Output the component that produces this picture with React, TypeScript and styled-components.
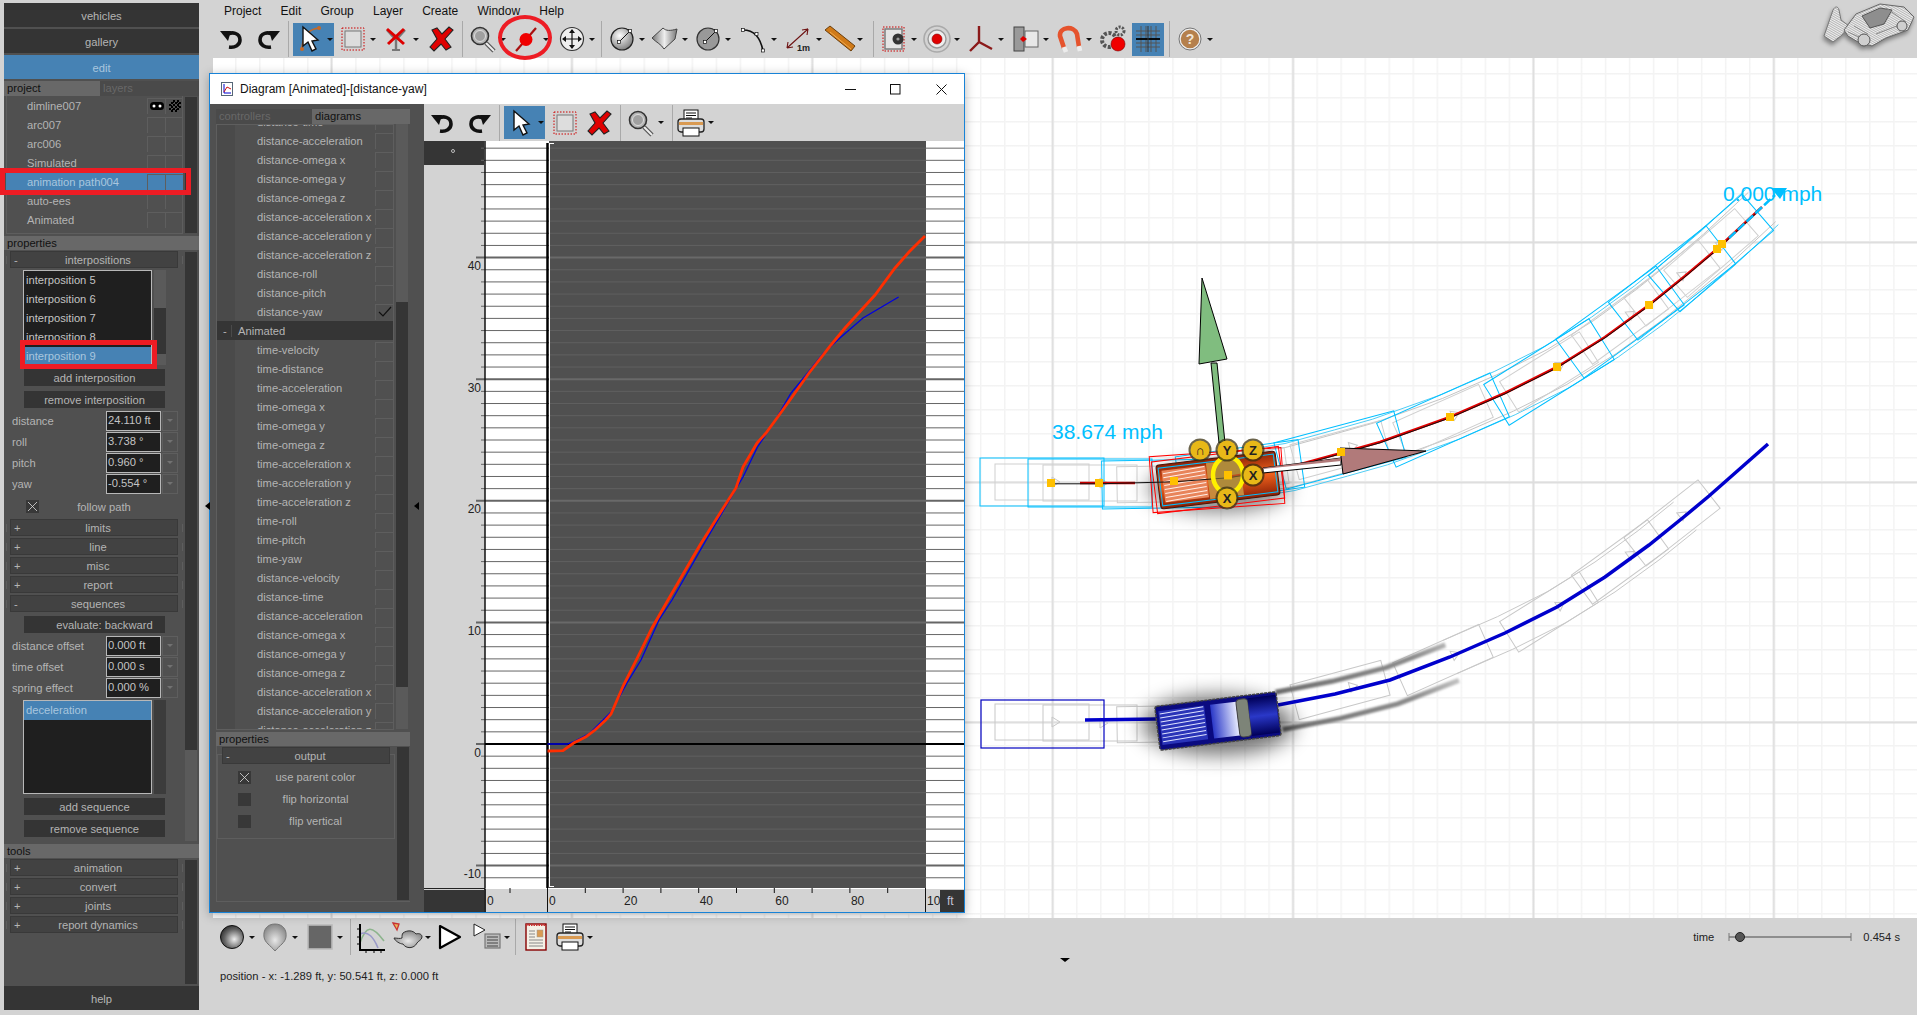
import React from 'react'
import styled, { createGlobalStyle } from 'styled-components'

type Pt = [number, number]

const GlobalStyle = createGlobalStyle`
  html, body { margin: 0; padding: 0; height: 100%; overflow: hidden; background: #d3d3d3; }
  body { font-family: "Liberation Sans", Arial, sans-serif; font-size: 11.2px; color: #b4b4b4; }
  #root { height: 100%; }
`

const App_ = styled.div`
  position: relative;
  display: flex;
  width: 1917px;
  height: 1015px;
  overflow: hidden;
  background: #d3d3d3;
`

/* ---------- side panels ---------- */

const Sidebar = styled.aside`
  position: relative;
  flex: none;
  display: flex;
  flex-direction: column;
  width: 195px;
  height: 1006px;
  margin: 3px 0 0 4px;
  background: #505050;
`

const NavButton = styled.div<{ $active?: boolean }>`
  flex: none;
  display: flex;
  align-items: center;
  justify-content: center;
  box-sizing: border-box;
  height: 24px;
  margin-bottom: 2px;
  padding-top: 1px;
  background: ${p => (p.$active ? '#4682b4' : '#343434')};
  color: ${p => (p.$active ? '#a9c6de' : '#b4b4b4')};
`

const HelpButton = styled(NavButton)`
  margin: 1px 0 0;
`

const Tabs = styled.div<{ $width: number }>`
  flex: none;
  display: flex;
  width: ${p => p.$width}px;
  height: 15px;
  background: #4a4a4a;
`

const Tab = styled.div<{ $on?: boolean; $width: number }>`
  box-sizing: border-box;
  width: ${p => p.$width}px;
  padding-left: 3px;
  line-height: 14px;
  background: ${p => (p.$on ? '#686868' : 'transparent')};
  color: ${p => (p.$on ? '#111' : '#686868')};
`

const Header = styled.div<{ $width?: number }>`
  flex: none;
  box-sizing: border-box;
  width: ${p => (p.$width ? `${p.$width}px` : 'auto')};
  height: 14px;
  margin-top: 2px;
  padding-left: 3px;
  line-height: 14px;
  background: #686868;
  color: #111;
`

const Split = styled.div<{ $h: number; $mt?: number }>`
  flex: none;
  display: flex;
  height: ${p => p.$h}px;
  margin-top: ${p => p.$mt ?? 0}px;
`

const Column = styled.div`
  flex: none;
  width: 177px;
  margin-left: 2px;
  overflow: hidden;
`

const ProjectList = styled(Column)`
  border-bottom: 1px solid #5e5e5e;
  height: 137px;
  box-shadow: inset 1px 0 #5e5e5e, inset -1px 0 #5e5e5e;
`

const ProjectRow = styled.div<{ $on?: boolean }>`
  display: flex;
  align-items: center;
  height: 19px;
  padding-left: 21px;
  background: ${p => (p.$on ? '#4682b4' : 'transparent')};
  color: ${p => (p.$on ? '#a9c6de' : '#b4b4b4')};
`

const RowName = styled.span`
  flex: 1;
`

const Cell = styled.span`
  display: flex;
  align-items: center;
  justify-content: center;
  box-sizing: border-box;
  width: 18px;
  height: 16px;
  border: 1px solid #5e5e5e;
  border-width: 1px 0 0 1px;
`

const Scroll = styled.div<{ $tint?: string; $mt?: number }>`
  flex: none;
  width: 12px;
  margin: ${p => p.$mt ?? 1}px 0 1px 2px;
  background: ${p => p.$tint ?? '#353535'};
`

const Thumb = styled.div<{ $top: number; $h: number }>`
  height: ${p => p.$h}px;
  margin-top: ${p => p.$top}px;
  background: #353535;
`

const BarWrap = styled.div`
  position: relative;
  height: 19px;
  padding: 0 5px 0 4px;
  &::before {
    content: '';
    position: absolute;
    left: 0;
    right: 0;
    top: 5px;
    height: 8px;
    border: 1px solid #5e5e5e;
    border-width: 0 1px;
  }
`

const Bar = styled.div`
  position: relative;
  display: flex;
  align-items: center;
  height: 17px;
  background: #424242;
  box-shadow: inset 0 0 0 1px #393939;
`

const BarSign = styled.span`
  width: 8px;
  padding-left: 4px;
  margin-right: -4px;
`

const BarTitle = styled.span`
  flex: 1;
  text-align: center;
`

const ListLine = styled.div<{ $h: number; $mt?: number }>`
  display: flex;
  height: ${p => p.$h}px;
  margin: ${p => p.$mt ?? 2}px 0 0 17px;
`

const ListBox = styled.div`
  box-sizing: border-box;
  width: 129px;
  overflow: hidden;
  background: #1f1f1f;
  border: 1px solid #b8b8b8;
`

const ListItem = styled.div<{ $on?: boolean }>`
  height: 19px;
  padding-left: 2px;
  line-height: 18px;
  background: ${p => (p.$on ? '#4682b4' : 'transparent')};
  color: ${p => (p.$on ? '#a9c6de' : '#c4c4c4')};
`

const ListScroll = styled.div<{ $tint: string }>`
  width: 12px;
  margin-left: 2px;
  background: ${p => p.$tint};
`

const PlainButton = styled.div<{ $mt: number; $indent?: number }>`
  display: flex;
  align-items: center;
  justify-content: center;
  box-sizing: border-box;
  width: 141px;
  height: 17px;
  margin: ${p => p.$mt}px 0 0 18px;
  padding-left: ${p => p.$indent ?? 0}px;
  background: #343434;
`

const ValueStack = styled.div<{ $mt: number }>`
  margin-top: ${p => p.$mt}px;
`

const ValueRow = styled.div`
  display: flex;
  align-items: center;
  height: 21px;
  padding-left: 6px;
`

const ValueLabel = styled.span`
  width: 94px;
`

const ValueBox = styled.div`
  box-sizing: border-box;
  width: 55px;
  height: 20px;
  padding-left: 1px;
  line-height: 17px;
  background: #1f1f1f;
  border: 1.5px solid #b8b8b8;
  color: #c4c4c4;
`

const Stepper = styled.div`
  display: flex;
  align-items: center;
  justify-content: center;
  box-sizing: border-box;
  width: 16px;
  height: 20px;
  margin-left: 1px;
  border: 1px solid #5e5e5e;
  &::after {
    content: '';
    border: 3px solid transparent;
    border-top-color: #727272;
    border-bottom: 0;
  }
`

const FlagRow = styled.div<{ $h: number }>`
  display: flex;
  align-items: center;
  height: ${p => p.$h}px;
  padding: 0 14px 0 20px;
`

const CheckBoxFace = styled.div`
  flex: none;
  display: flex;
  width: 13px;
  height: 13px;
  background: #383838;
`

const FlagLabel = styled.span`
  flex: 1;
  text-align: center;
`

const AnnotRect = styled.div<{ $x: number; $y: number; $w: number; $h: number }>`
  position: absolute;
  left: ${p => p.$x}px;
  top: ${p => p.$y}px;
  width: ${p => p.$w}px;
  height: ${p => p.$h}px;
  box-sizing: border-box;
  border: 5px solid #ed1c24;
  pointer-events: none;
`

const SashLeft = styled.div<{ $x: number; $y: number }>`
  position: absolute;
  left: ${p => p.$x}px;
  top: ${p => p.$y}px;
  border: 4px solid transparent;
  border-right: 5px solid #000;
  border-left: 0;
`

/* ---------- main column ---------- */

const Main = styled.main`
  position: relative;
  flex: 1;
  display: flex;
  flex-direction: column;
  min-width: 0;
  margin-left: 14px;
`

const MenuBar = styled.nav`
  flex: none;
  display: flex;
  gap: 19.2px;
  height: 20px;
  padding-left: 11px;
  line-height: 22px;
  font-size: 12px;
  color: #111;
`

const Toolbar = styled.div<{ $pl: number; $h: number }>`
  flex: none;
  display: flex;
  align-items: center;
  height: ${p => p.$h}px;
  padding-left: ${p => p.$pl}px;
  background: #d3d3d3;
`

const Tool = styled.div<{ $w: number; $gap?: number; $active?: boolean; $center?: boolean }>`
  flex: none;
  display: flex;
  align-items: center;
  justify-content: ${p => (p.$center ? 'center' : 'flex-start')};
  width: ${p => p.$w}px;
  height: 33px;
  margin-right: ${p => p.$gap ?? 0}px;
  background: ${p => (p.$active ? '#4682b4' : 'transparent')};
  svg { flex: none; }
`

const Drop = styled.i`
  flex: none;
  width: 0;
  height: 0;
  border: 3px solid transparent;
  border-top: 3px solid #111;
  border-bottom: 0;
`

const Sep = styled.div<{ $l: number; $r: number }>`
  flex: none;
  width: 1px;
  height: 36px;
  margin: 0 ${p => p.$r}px 0 ${p => p.$l}px;
  background: #a9a9a9;
`

const Canvas = styled.section`
  flex: none;
  height: 860px;
  background-color: #fff;
  background-image:
    linear-gradient(90deg, transparent, #dedede 1px, #dedede 2px, transparent 3px),
    linear-gradient(180deg, transparent, #dedede 1px, #dedede 2px, transparent 3px),
    linear-gradient(90deg, #f3f3f3 1px, transparent 2px),
    linear-gradient(180deg, #f3f3f3 1px, transparent 2px);
  background-size: 240.4px 100%, 100% 240px, 24.04px 100%, 100% 24px;
  background-position: 117px 0, 0 183px, 22px 0, 0 15px;
  svg { display: block; width: 100%; height: 100%; }
`

const TimePanel = styled.div`
  display: flex;
  align-items: center;
  margin-left: auto;
  padding-right: 17px;
  color: #222;
`

const TimeLabel = styled.span`
  margin-right: 14px;
`

const TimeValue = styled.span`
  margin-left: 11px;
`

const SashRow = styled.div`
  flex: none;
  display: flex;
  justify-content: center;
  height: 6px;
  padding-top: 2px;
  &::after {
    content: '';
    height: 0;
    border: 5px solid transparent;
    border-top: 4px solid #000;
    border-bottom: 0;
  }
`

const Status = styled.div`
  padding: 6px 0 0 7px;
  color: #222;
`

const Logo = styled.svg`
  position: absolute;
  top: 0;
  right: 0;
  filter: drop-shadow(-1px 3px 2px rgba(0, 0, 0, 0.4));
`

const TargetRing = styled.div`
  position: absolute;
  left: 285px;
  top: 15px;
  box-sizing: border-box;
  width: 54px;
  height: 45px;
  border: 4.5px solid #ed1c24;
  border-radius: 50%;
  pointer-events: none;
`

/* ---------- diagram window ---------- */

const DiagramWindow = styled.div`
  position: absolute;
  left: 209px;
  top: 73px;
  display: flex;
  flex-direction: column;
  box-sizing: border-box;
  width: 756px;
  height: 840px;
  border: 1px solid #1883d7;
  background: #d3d3d3;
  box-shadow: 0 2px 10px rgba(0, 0, 0, 0.28);
`

const TitleBar = styled.div`
  flex: none;
  display: flex;
  align-items: center;
  height: 30px;
  padding-left: 11px;
  background: #fff;
  color: #111;
  font-size: 12px;
`

const TitleText = styled.span`
  flex: 1;
  margin-left: 7px;
`

const WinButton = styled.span`
  display: flex;
  align-items: center;
  justify-content: center;
  width: 45.5px;
  height: 30px;
`

const WindowBody = styled.div`
  flex: 1;
  display: flex;
  min-height: 0;
`

const DiagramSide = styled.div`
  position: relative;
  flex: none;
  display: flex;
  flex-direction: column;
  box-sizing: border-box;
  width: 214px;
  padding: 5px 0 0 6px;
  background: #505050;
`

const DiagramList = styled.div`
  flex: none;
  box-sizing: border-box;
  width: 178px;
  overflow: hidden;
  border: 1px solid #5e5e5e;
  background: linear-gradient(90deg, #4a4a4a 18px, #505050 18px);
`

const DiagramRows = styled.div`
  margin-top: -13px;
`

const DiagramRow = styled.div`
  display: flex;
  align-items: center;
  height: 19px;
  padding-left: 40px;
`

const GroupRow = styled.div`
  display: flex;
  align-items: center;
  height: 19px;
  background: #353535;
`

const GroupSign = styled.span`
  width: 15px;
  padding-left: 6px;
  box-sizing: border-box;
  margin: 0 6px 0 0;
  border-right: 1px solid #4a4a4a;
`

const OutputGroup = styled.div`
  flex: none;
  box-sizing: border-box;
  width: 178px;
  height: 85px;
  margin: 8px 0 0 0;
  border: 1px solid #5e5e5e;
`

const OutputBar = styled(Bar)`
  margin: -8px 4px 2px;
`

const OutputFrame = styled.div`
  flex: none;
  display: flex;
  box-sizing: border-box;
  width: 194px;
  height: 156px;
  border-bottom: 1px solid #5e5e5e;
  border-left: 1px solid #5e5e5e;
`

const ChartColumn = styled.div`
  flex: 1;
  display: flex;
  flex-direction: column;
  min-width: 0;
`

const ChartSvg = styled.svg`
  display: block;
  flex: none;
`

/* ---------- icons ---------- */

const Ico = ({ children }: { children: React.ReactNode }) => (
  <svg width="34" height="32" viewBox="0 0 34 32">{children}</svg>
)

const Undo = () => (
  <Ico>
    <path d="M5 8l11 0-3 10z" fill="#111" />
    <path d="M11 12c6-4 14-2 14 5 0 5-5 8-11 7" fill="none" stroke="#111" strokeWidth="3.6" />
  </Ico>
)

const Redo = () => (
  <Ico>
    <path d="M29 8l-11 0 3 10z" fill="#111" />
    <path d="M23 12c-6-4-14-2-14 5 0 5 5 8 11 7" fill="none" stroke="#111" strokeWidth="3.6" />
  </Ico>
)

const Pick = ({ curve }: { curve?: boolean }) => (
  <Ico>
    {curve && (
      <>
        <path d="M9 26C9 16 14 6 26 5" fill="none" stroke="#c86a28" strokeWidth="1.4" />
        <circle cx="9" cy="26" r="2" fill="#c86a28" />
        <circle cx="26" cy="5" r="2" fill="#c86a28" />
      </>
    )}
    <path d="M10 4l0 19 5-4 4 9 4-2-4-8 6-1z" fill="#fff" stroke="#111" strokeWidth="1.4" />
  </Ico>
)

const DotRect = () => (
  <Ico>
    <rect x="6" y="5" width="22" height="22" fill="none" stroke="#c00" strokeDasharray="1.5 1.5" />
    <rect x="9" y="8" width="16" height="16" fill="#ddd" stroke="#777" />
  </Ico>
)

const RedCross = () => (
  <Ico>
    <path d="M7 7l5-2 5 6 7-7 4 3-8 9 6 8-5 3-5-6-7 7-4-4 7-8z" fill="#e00000" stroke="#222" strokeWidth="1.1" />
  </Ico>
)

const Fork = () => (
  <Ico>
    <path d="M8 7l9 10 9-10M17 17v10" fill="none" stroke="#777" strokeWidth="2.4" />
    <path d="M13 27h8" stroke="#777" strokeWidth="2" />
    <path d="M8 6l17 15M25 6L9 21" stroke="#d00" strokeWidth="3" />
  </Ico>
)

const Lens = () => (
  <Ico>
    <path d="M20 20l8 8" stroke="#555" strokeWidth="4.5" />
    <path d="M20 20l8 8" stroke="#eee" strokeWidth="2" />
    <circle cx="14" cy="13" r="8.5" fill="#b4b4b4" stroke="#333" strokeWidth="1.6" />
    <circle cx="14" cy="13" r="5.5" fill="#a0a0a0" stroke="#ddd" />
  </Ico>
)

const RedTarget = () => (
  <Ico>
    <path d="M7 28L27 5" stroke="#a81010" strokeWidth="2.2" />
    <circle cx="17" cy="16.5" r="6.5" fill="#f00000" />
  </Ico>
)

const Move = () => (
  <Ico>
    <circle cx="17" cy="16" r="11.5" fill="#eee" stroke="#333" strokeWidth="1.2" />
    <path d="M17 7v18M8 16h18" stroke="#111" strokeWidth="1.2" />
    <path d="M17 6l-3 4h6zM17 26l-3-4h6zM7 16l4-3v6zM27 16l-4-3v6z" fill="#111" />
  </Ico>
)

const Handles = ({ a, b }: { a: Pt; b: Pt }) => (
  <>
    <path d={`M${a[0]} ${a[1]}L${b[0]} ${b[1]}`} stroke="#111" />
    <rect x={a[0] - 1.5} y={a[1] - 1.5} width="3" height="3" fill="#fff" stroke="#111" strokeWidth=".7" />
    <rect x={b[0] - 1.5} y={b[1] - 1.5} width="3" height="3" fill="#fff" stroke="#111" strokeWidth=".7" />
  </>
)

const Sphere = () => (
  <Ico>
    <circle cx="17" cy="16" r="11" fill="url(#gSphere)" stroke="#222" strokeWidth="1.2" />
    <Handles a={[14, 19]} b={[25, 8]} />
  </Ico>
)

const Surface = () => (
  <Ico>
    <path d="M4 15l11-10c3 3 7 3 14 1l-2 10-11 10c-3-5-7-6-12-11z" fill="url(#gSurf)" stroke="#444" />
  </Ico>
)

const Disc = () => (
  <Ico>
    <circle cx="17" cy="16" r="11" fill="#999" stroke="#333" strokeWidth="1.2" />
    <Handles a={[14, 19]} b={[25, 8]} />
  </Ico>
)

const ArcTool = () => (
  <Ico>
    <path d="M6 7c9 0 17 5 20 21" fill="none" stroke="#111" strokeWidth="1.6" />
    <rect x="4.5" y="5.5" width="3" height="3" fill="#fff" stroke="#111" strokeWidth=".7" />
    <rect x="18" y="9.5" width="3" height="3" fill="#fff" stroke="#111" strokeWidth=".7" />
    <rect x="24.5" y="26" width="3" height="3" fill="#fff" stroke="#111" strokeWidth=".7" />
  </Ico>
)

const Dimension = () => (
  <Ico>
    <path d="M5 25L26 6M5 25l1-6M5 25l6-1M26 6l-6 1M26 6l-1 6" fill="none" stroke="#6e1414" strokeWidth="1.1" />
    <text x="15" y="28" fontSize="9" fontWeight="700" fill="#222">1m</text>
  </Ico>
)

const Chisel = () => (
  <Ico>
    <path d="M2 7l5-4 25 20-4 5z" fill="#d07a18" stroke="#6a3e0c" />
    <path d="M7 9l21 17" stroke="#efa94e" />
  </Ico>
)

const FramedDisc = () => (
  <Ico>
    <rect x="6" y="4" width="21" height="24" fill="none" stroke="#c00" strokeDasharray="1.5 1.5" />
    <rect x="8" y="6" width="17" height="20" fill="#e4e4e4" stroke="#777" strokeWidth="1.4" />
    <circle cx="21" cy="16" r="5.5" fill="#333" />
    <circle cx="21" cy="16" r="1.6" fill="#999" />
  </Ico>
)

const Rings = () => (
  <Ico>
    <circle cx="17" cy="16" r="13" fill="none" stroke="#aaa" strokeWidth="1.6" />
    <circle cx="17" cy="16" r="9" fill="#eee" stroke="#999" strokeWidth="1.4" />
    <circle cx="17" cy="16" r="5" fill="#e00000" stroke="#800" strokeWidth=".6" />
  </Ico>
)

const Axes = () => (
  <Ico>
    <path d="M15 3v16L6 28M15 19l13 7" fill="none" stroke="#8b1a1a" strokeWidth="2.4" />
  </Ico>
)

const Mirror = () => (
  <Ico>
    <rect x="5" y="4" width="10" height="24" fill="#999" stroke="#444" />
    <rect x="16" y="8" width="13" height="16" fill="#e8e8e8" stroke="#666" />
    <path d="M14 13l4 3-4 3-3-3z" fill="#d00" />
  </Ico>
)

const Magnet = () => (
  <Ico>
    <path d="M12 25L8 13C7 4 22 2 25 11l2 13" fill="none" stroke="#e5532d" strokeWidth="4.6" />
    <path d="M12 24l2 5M27 23l1 5" stroke="#ececec" strokeWidth="4.6" />
  </Ico>
)

const Gear = () => (
  <Ico>
    <circle cx="13" cy="17" r="7" fill="none" stroke="#555" strokeWidth="4" strokeDasharray="3 1.6" />
    <circle cx="24" cy="8" r="4" fill="none" stroke="#555" strokeWidth="3" strokeDasharray="2 1.4" />
    <circle cx="22" cy="21" r="7" fill="#f00000" stroke="#700" strokeWidth=".6" />
  </Ico>
)

const GridIcon = () => (
  <Ico>
    <path d="M10 3v26M15 3v26M20 3v26M25 3v26M5 8h24M5 12h24M5 20h24M5 24h24" stroke="#555" />
    <path d="M5 16h24" stroke="#000" strokeWidth="1.8" />
    <path d="M17 3v26" stroke="#333" />
  </Ico>
)

const HelpIcon = () => (
  <Ico>
    <circle cx="17" cy="16" r="10" fill="#b5804c" stroke="#eee" strokeWidth="1.5" />
    <circle cx="17" cy="16" r="11" fill="none" stroke="#777" />
    <text x="17" y="21" fontSize="14" fontWeight="700" textAnchor="middle" fill="#f0e6d8">?</text>
  </Ico>
)

const Ball = () => (
  <Ico>
    <circle cx="17" cy="16" r="11.5" fill="url(#gBall)" stroke="#111" />
  </Ico>
)

const Blob = () => (
  <Ico>
    <path d="M17 3c8 0 12 6 11 13-1 6-6 8-11 14-5-6-10-8-11-14C5 9 9 3 17 3z" fill="url(#gBlob)" stroke="#777" />
  </Ico>
)

const Swatch = () => (
  <Ico>
    <rect x="5" y="4" width="24" height="24" fill="#666" stroke="#bbb" strokeWidth="1.6" />
  </Ico>
)

const GraphIcon = () => (
  <Ico>
    <path d="M6 22C12 4 18 4 30 20" fill="none" stroke="#8cb48c" strokeWidth="1.6" />
    <path d="M6 13c8-4 14 4 18 14" fill="none" stroke="#9a9ac8" strokeWidth="1.6" />
    <path d="M6 3v26h25" fill="none" stroke="#000" strokeWidth="2" />
    <path d="M3 8h3M3 16h3M3 23h3M12 29v3M20 29v3M27 29v3" stroke="#000" />
  </Ico>
)

const Teapot = () => (
  <Ico>
    <path d="M2 2l6 1-2 6z" fill="#e6b85c" stroke="#c33" strokeWidth="1.3" />
    <path d="M12 12c4-3 10-3 13 1 3-1 6 0 6 3s-4 4-5 6c-3 6-11 6-14 1-3 0-8-3-9-6 3 0 6 1 8 0 0-2 0-4 1-5z" fill="url(#gBlob)" stroke="#333" />
  </Ico>
)

const Play = () => (
  <Ico>
    <path d="M7 5l20 11L7 27z" fill="#fff" stroke="#000" strokeWidth="2.2" strokeLinejoin="round" />
  </Ico>
)

const PlayList = () => (
  <Ico>
    <path d="M4 3l11 6-11 6z" fill="#fff" stroke="#222" />
    <rect x="15" y="13" width="15" height="14" fill="#bbb" stroke="#777" strokeWidth="1.2" />
    <path d="M17 16h11M17 19h11M17 22h11M17 25h11" stroke="#444" />
  </Ico>
)

const Note = () => (
  <Ico>
    <rect x="6" y="3" width="20" height="26" fill="#f4f0e6" stroke="#800" strokeWidth="1.4" />
    <path d="M6 4h20" stroke="#c33" strokeDasharray="1.5 1" strokeWidth="2" />
    <rect x="17" y="9" width="6" height="7" fill="#d99a52" stroke="#999" strokeWidth=".5" />
    <path d="M9 10h6M9 13h6M9 16h6M9 19h14M9 22h14M9 25h14" stroke="#888" />
  </Ico>
)

const Printer = () => (
  <Ico>
    <rect x="10" y="3" width="14" height="10" fill="#fff" stroke="#111" />
    <path d="M12 6h10M12 8.5h10M12 11h6" stroke="#111" />
    <rect x="4" y="12" width="26" height="13" rx="3" fill="#ddd" stroke="#222" strokeWidth="1.3" />
    <rect x="5" y="15" width="24" height="3" fill="#d99a52" />
    <rect x="9" y="21" width="16" height="8" fill="#fff" stroke="#111" />
  </Ico>
)

const SmallX = () => (
  <svg width="13" height="13" viewBox="0 0 13 13">
    <path d="M2 2l9 9M11 2l-9 9" stroke="#ddd" strokeWidth=".8" />
  </svg>
)

const CheckBox = ({ on }: { on?: boolean }) => <CheckBoxFace>{on && <SmallX />}</CheckBoxFace>

const Goggles = () => (
  <svg width="14" height="8" viewBox="0 0 14 8">
    <rect width="14" height="8" rx="3.5" fill="#000" />
    <circle cx="4" cy="4" r="1.5" fill="#fff" />
    <circle cx="10" cy="4" r="1.5" fill="#fff" />
  </svg>
)

const Dither = () => (
  <svg width="12" height="12" viewBox="0 0 12 12" shapeRendering="crispEdges">
    {Array.from({ length: 36 }, (_, i) => {
      const x = i % 6
      const y = Math.floor(i / 6)
      return (x + y) % 2 === 0 && Math.hypot(x - 2.5, y - 2.5) < 3.4
        ? <rect key={i} x={x * 2} y={y * 2} width="1.5" height="1.5" fill="#000" />
        : null
    })}
    <circle cx="6" cy="6" r="4" fill="none" stroke="#000" strokeDasharray="1 1" />
  </svg>
)

const Tick = () => (
  <svg width="14" height="12" viewBox="0 0 14 12">
    <path d="M1 6l4 4 8-9" fill="none" stroke="#111" strokeWidth="1.2" />
  </svg>
)

/* ---------- scene helpers ---------- */

const line = (pts: Pt[]) => pts.map(p => p.join(',')).join(' ')

const offset = (pts: Pt[], d: number): Pt[] =>
  pts.map((p, i) => {
    const a = pts[Math.max(i - 1, 0)]
    const b = pts[Math.min(i + 1, pts.length - 1)]
    const dx = b[0] - a[0]
    const dy = b[1] - a[1]
    const l = Math.hypot(dx, dy)
    return [p[0] - (dy / l) * d, p[1] + (dx / l) * d] as Pt
  })

const upperPath: Pt[] = [
  [1051, 483], [1099, 483], [1174, 481], [1228, 477], [1290, 467], [1341, 453], [1380, 442],
  [1450, 417], [1505, 393], [1557, 367], [1605, 337], [1649, 305], [1685, 276], [1717, 249], [1762, 207],
]

const lowerPath: Pt[] = [
  [1278, 705], [1335, 694], [1390, 680], [1450, 657], [1505, 633], [1557, 607], [1605, 577],
  [1649, 545], [1685, 516], [1709, 496], [1768, 444],
]

const frames: [number, number, number][] = [
  [1042, 482, 0], [1090, 483, 0], [1164, 484, -1], [1240, 472, -8], [1340, 450, -15],
  [1443, 420, -24], [1549, 372, -32], [1620, 322, -36], [1672, 283, -38], [1711, 253, -41],
]

const Frame = ({ c, w, h, stroke, dy = 0, mark }: { c: [number, number, number]; w: number; h: number; stroke: string; dy?: number; mark?: boolean }) => (
  <g transform={`rotate(${c[2]} ${c[0]} ${c[1] + dy})`}>
    <rect x={c[0] - w / 2} y={c[1] + dy - h / 2} width={w} height={h} fill="none" stroke={stroke} strokeWidth="1" />
    {mark && <path d={`M${c[0] + 10} ${c[1] + dy - 5}v10l8 -5z`} fill="none" stroke="#c8c8c8" strokeWidth="1" />}
  </g>
)

const Knob = ({ x, y, label }: { x: number; y: number; label: string }) => (
  <g>
    <circle cx={x} cy={y} r="11.5" fill="#3a3010" opacity=".75" />
    <circle cx={x} cy={y} r="9.5" fill="#e8b818" />
    <text x={x} y={y + 4.5} fontSize="13" fontWeight="700" textAnchor="middle" fill="#222">{label}</text>
  </g>
)

const marks: Pt[] = [
  [1051, 483], [1099, 483], [1174, 481], [1228, 476], [1341, 452], [1450, 417],
  [1557, 367], [1649, 305], [1717, 249], [1722, 244],
]

const Scene = () => (
  <svg viewBox="213 58 1704 860">
    <defs>
      <filter id="soft" x="-40%" y="-80%" width="180%" height="260%">
        <feGaussianBlur stdDeviation="10" />
      </filter>
      <filter id="track" x="-5%" y="-20%" width="110%" height="140%">
        <feGaussianBlur stdDeviation=".9" />
      </filter>
      <linearGradient id="gTrack" gradientUnits="userSpaceOnUse" x1="1280" y1="0" x2="1470" y2="0">
        <stop offset="0" stopColor="#707070" />
        <stop offset=".7" stopColor="#8c8c8c" />
        <stop offset="1" stopColor="#cfcfcf" />
      </linearGradient>
      <linearGradient id="gHood" x1="0" y1="0" x2="0" y2="1">
        <stop offset="0" stopColor="#8a2006" />
        <stop offset=".5" stopColor="#f0621c" />
        <stop offset="1" stopColor="#8a2006" />
      </linearGradient>
      <linearGradient id="gBlue" x1="0" y1="0" x2="0" y2="1">
        <stop offset="0" stopColor="#000058" />
        <stop offset=".5" stopColor="#2a38c8" />
        <stop offset="1" stopColor="#000058" />
      </linearGradient>
      <linearGradient id="gCab" x1="0" y1="0" x2="1" y2="0">
        <stop offset="0" stopColor="#2a38c8" />
        <stop offset="1" stopColor="#e8ecff" />
      </linearGradient>
    </defs>

    {/* swept envelope of the animated path */}
    <polyline points={line(offset(upperPath.slice(3), 24))} fill="none" stroke="#4fcdf5" />
    <polyline points={line(offset(upperPath.slice(3), -24))} fill="none" stroke="#4fcdf5" />
    <polyline points={line(offset(upperPath.slice(3), 20))} fill="none" stroke="#c4c4c4" />
    <polyline points={line(offset(upperPath.slice(3), -20))} fill="none" stroke="#c4c4c4" />
    {frames.map(c => <Frame key={`g${c[0]}`} c={c} w={94} h={36} stroke="#cfcfcf" mark />)}
    {frames.map(c => <Frame key={`c${c[0]}`} c={c} w={124} h={48} stroke="#00bfff" />)}

    {/* animated car */}
    <ellipse cx="1218" cy="488" rx="70" ry="24" fill="#000" opacity=".5" filter="url(#soft)" />
    <g transform="rotate(-7 1218 480)">
      <rect x="1158" y="458" width="120" height="44" rx="3" fill="url(#gHood)" stroke="#4a1206" />
      <rect x="1163" y="464" width="44" height="32" fill="#e8845a" />
      {[466, 470, 474, 478, 482, 486, 490, 494].map(y => (
        <path key={y} d={`M1164 ${y + 1}L1206 ${y - 1}`} stroke="#ffeee6" strokeWidth="1" />
      ))}
      <rect x="1208" y="462" width="34" height="36" fill="#c88a3c" />
      <rect x="1154" y="454" width="128" height="52" fill="none" stroke="#f00" />
      <rect x="1151" y="452" width="132" height="56" fill="none" stroke="#f00" transform="rotate(3 1218 480)" />
      <rect x="1160" y="461" width="116" height="38" fill="none" stroke="#00bfff" />
    </g>

    <path d="M1080 483H1135" stroke="#c80000" strokeWidth="2.5" />
    <polyline points={line(upperPath.slice(3))} fill="none" stroke="#e00000" strokeWidth="2.6" />
    <polyline points={line(upperPath)} fill="none" stroke="#111" strokeWidth="1" transform="translate(0 .8)" />
    <path d="M1729 238L1775 195" stroke="#00bfff" strokeWidth="2.5" strokeDasharray="9 3" />
    <path d="M1771 188l16 0-7 11z" fill="#00bfff" />

    {/* vectors */}
    <path d="M1211 363l6 0 8 80-6 0z" fill="#80bd7f" stroke="#000" />
    <path d="M1202 278l25 81-28 5z" fill="#80bd7f" stroke="#000" />
    <path d="M1263 468l78-10 0 7-78 8z" fill="#fff" stroke="#000" />
    <path d="M1263 468l78-10 0 3-78 8z" fill="#b17a7a" />
    <path d="M1340 448l86 3-83 23z" fill="#b17a7a" stroke="#000" />

    {marks.map(p => <rect key={p[0]} x={p[0] - 4} y={p[1] - 4} width="8" height="8" fill="#ffc000" />)}

    {/* gizmo */}
    <ellipse cx="1228" cy="475" rx="15" ry="18" fill="#9a8a3a" opacity=".55" />
    <ellipse cx="1228" cy="475" rx="15" ry="18" fill="none" stroke="#fff000" strokeWidth="4.5" />
    <rect x="1224" y="471" width="8" height="8" fill="#ffc000" />
    <Knob x={1200} y={450} label="∩" />
    <Knob x={1227} y={450} label="Y" />
    <Knob x={1253} y={450} label="Z" />
    <Knob x={1253} y={475} label="X" />
    <Knob x={1227} y={498} label="X" />

    <text x="1052" y="439" fontSize="21" fill="#00bfff">38.674 mph</text>
    <text x="1723" y="201" fontSize="21" fill="#00bfff">0.000 mph</text>

    {/* simulated path */}
    <polyline points={line(offset(lowerPath, 18).slice(3, 9))} fill="none" stroke="#c8c8c8" />
    <polyline points={line(offset(lowerPath, -18).slice(3, 9))} fill="none" stroke="#c8c8c8" />
    {frames.filter(c => c[0] !== 1240 && c[0] !== 1711).map(c => (
      <Frame key={`l${c[0]}`} c={c} w={94} h={36} stroke="#c8c8c8" dy={240} mark />
    ))}
    <g filter="url(#track)">
      <polyline points={line(offset(lowerPath.slice(0, 4), -13))} fill="none" stroke="url(#gTrack)" strokeWidth="5" />
      <polyline points={line(offset(lowerPath.slice(0, 4), 25))} fill="none" stroke="url(#gTrack)" strokeWidth="5" />
    </g>
    <polyline points={line([[1085, 720], [1157, 719]])} fill="none" stroke="#0000cc" strokeWidth="3.5" />
    <polyline points={line(lowerPath)} fill="none" stroke="#0000cc" strokeWidth="3.5" />
    <rect x="981" y="700" width="123" height="48" fill="none" stroke="#0000c0" strokeWidth="1.2" />

    {/* truck */}
    <ellipse cx="1218" cy="725" rx="76" ry="30" fill="#000" opacity=".55" filter="url(#soft)" />
    <g transform="rotate(-7 1218 721)">
      <rect x="1157" y="699" width="122" height="44" rx="2" fill="#0a0a80" stroke="#444" strokeWidth="1.5" strokeDasharray="3 1" />
      <rect x="1160" y="704" width="46" height="34" fill="#2a34b8" />
      {[706, 710, 714, 718, 722, 726, 730, 734].map(y => (
        <path key={y} d={`M1161 ${y + 1}L1205 ${y - 1}`} stroke="#dfe4ff" strokeWidth="1" />
      ))}
      <rect x="1212" y="704" width="26" height="34" fill="url(#gCab)" />
      <rect x="1238" y="702" width="12" height="38" rx="4" fill="#7d8478" stroke="#444" />
      <rect x="1250" y="702" width="28" height="38" fill="url(#gBlue)" />
    </g>
  </svg>
)

/* ---------- chart ---------- */

const redCurve: Pt[] = [
  [547.5, 751], [563, 750.7], [573.6, 743], [586, 736.7], [595, 730], [605.7, 720], [611, 714],
  [623.6, 685], [638, 656.7], [652, 628], [668, 600], [700, 545], [722, 510], [736, 488], [743, 467],
  [757, 443], [766, 433], [777, 418], [791.4, 398], [809, 373], [831, 345], [845, 328], [875, 295],
  [895, 268], [909, 252], [925, 236],
]

const blueCurve: Pt[] = [
  [547.5, 744], [567, 744], [575, 741], [590, 733], [611, 712], [627, 683], [641, 660], [659, 620],
  [672, 600], [705, 542], [743, 477], [757.5, 447], [773.6, 423], [791, 393], [806, 375], [823.6, 353],
  [841, 337], [863, 318], [898.6, 297],
]

const yValues = Array.from({ length: 61 }, (_, i) => 49 - i)
const yOf = (v: number) => 744 - v * 12.16
const xMarks = [0, 10, 20, 30, 40, 50, 60, 70, 80, 90]
const xOf = (v: number) => 547.5 + v * 3.78

const Chart = () => (
  <ChartSvg width="540" height="771" viewBox="424 141 540 771">
    <rect x="485" y="141" width="479" height="747" fill="#fff" />
    <rect x="424" y="141" width="60" height="24" fill="#353535" />
    <circle cx="453" cy="151" r="1.5" fill="none" stroke="#bbb" />
    {yValues.map(v => {
      const major = v % 10 === 0
      const y = yOf(v)
      return <path key={v} d={`M${major ? 476 : 481} ${y}H964`} stroke="#666" strokeWidth={major ? 2 : 1} />
    })}
    <rect x="549" y="141" width="377" height="747" fill="#505050" />
    {yValues.map(v => (
      <path key={v} d={`M549 ${yOf(v)}H926`} stroke={v % 10 === 0 ? '#696969' : '#606060'} strokeWidth={v % 10 === 0 ? 2 : 1} />
    ))}
    {[40, 30, 20, 10, 0, -10].map(v => (
      <text key={v} x="481" y={yOf(v) + 12.5} fontSize="12" textAnchor="end" fill="#222">{v}</text>
    ))}
    <path d="M485 141V912" stroke="#111" strokeWidth="1.5" />
    <path d="M547.5 143V888" stroke="#000" strokeWidth="2.5" />
    <path d="M549.5 143V887M549 143.5h5M549 886.5h5" stroke="#fff" />
    <path d="M485 744H964" stroke="#000" strokeWidth="2" />
    <polyline points={line(blueCurve)} fill="none" stroke="#0000e0" strokeWidth="1.3" />
    <polyline points={line(redCurve)} fill="none" stroke="#ff2e00" strokeWidth="2.8" />

    <rect x="424" y="888" width="540" height="1" fill="#222" />
    <rect x="485" y="888" width="479" height="1" fill="#fff" />
    <rect x="424" y="890" width="60" height="22" fill="#353535" />
    {xMarks.map(v => (
      <path key={v} d={`M${xOf(v)} 888V${v === 0 ? 912 : 893}`} stroke="#111" />
    ))}
    <path d="M485 888V912M925.5 888V912M510 888v5" stroke="#111" />
    <text x="487" y="905" fontSize="12" fill="#222">0</text>
    {[0, 20, 40, 60, 80].map(v => (
      <text key={v} x={v === 0 ? 549 : xOf(v) + 1} y="905" fontSize="12" fill="#222">{v}</text>
    ))}
    <text x="927" y="905" fontSize="12" fill="#222">10</text>
    <rect x="940" y="890" width="24" height="22" fill="#353535" />
    <text x="947" y="905" fontSize="12" fill="#c4c4d8">ft</text>
  </ChartSvg>
)

/* ---------- data ---------- */

const projectRows = ['dimline007', 'arc007', 'arc006', 'Simulated', 'animation path004', 'auto-ees', 'Animated']
const interpositions = [5, 6, 7, 8, 9]

const distanceSet = [
  'distance-velocity', 'distance-time', 'distance-acceleration', 'distance-omega x', 'distance-omega y',
  'distance-omega z', 'distance-acceleration x', 'distance-acceleration y', 'distance-acceleration z',
]

const timeSet = [
  'time-velocity', 'time-distance', 'time-acceleration', 'time-omega x', 'time-omega y', 'time-omega z',
  'time-acceleration x', 'time-acceleration y', 'time-acceleration z', 'time-roll', 'time-pitch', 'time-yaw',
]

const upperSet = [...distanceSet.slice(1), 'distance-roll', 'distance-pitch', 'distance-yaw']

const GroupBar = ({ sign, title }: { sign: string; title: string }) => (
  <BarWrap>
    <Bar>
      <BarSign>{sign}</BarSign>
      <BarTitle>{title}</BarTitle>
    </Bar>
  </BarWrap>
)

const Value = ({ label, value }: { label: string; value: string }) => (
  <ValueRow>
    <ValueLabel>{label}</ValueLabel>
    <ValueBox>{value}</ValueBox>
    <Stepper />
  </ValueRow>
)

const CheckCell = ({ on }: { on?: boolean }) => <Cell>{on && <Tick />}</Cell>

const DiagramEntry = ({ name }: { name: string }) => (
  <DiagramRow>
    <RowName>{name}</RowName>
    <CheckCell on={name === 'distance-yaw'} />
  </DiagramRow>
)

export default function App() {
  return (
    <App_>
      <GlobalStyle />
      <svg width="0" height="0" style={{ position: 'absolute' }}>
        <defs>
          <radialGradient id="gSphere" cx=".4" cy=".35" r=".8">
            <stop offset="0" stopColor="#fff" />
            <stop offset="1" stopColor="#666" />
          </radialGradient>
          <linearGradient id="gSurf" x1="0" y1="0" x2="1" y2="0">
            <stop offset="0" stopColor="#777" />
            <stop offset=".5" stopColor="#eee" />
            <stop offset="1" stopColor="#777" />
          </linearGradient>
          <radialGradient id="gBall" cx=".6" cy=".6" r=".7">
            <stop offset="0" stopColor="#eee" />
            <stop offset=".6" stopColor="#666" />
            <stop offset="1" stopColor="#222" />
          </radialGradient>
          <radialGradient id="gBlob" cx=".5" cy=".6" r=".7">
            <stop offset="0" stopColor="#e8e8e8" />
            <stop offset="1" stopColor="#777" />
          </radialGradient>
          <pattern id="hatch" width="2" height="2" patternUnits="userSpaceOnUse" patternTransform="rotate(30)">
            <rect width="2" height="2" fill="#efefef" />
            <rect width="2" height=".8" fill="#a8a8a8" />
          </pattern>
        </defs>
      </svg>

      <Sidebar>
        <NavButton>vehicles</NavButton>
        <NavButton>gallery</NavButton>
        <NavButton $active>edit</NavButton>
        <Tabs $width={195}>
          <Tab $on $width={96}>project</Tab>
          <Tab $width={96}>layers</Tab>
        </Tabs>
        <Split $h={138}>
          <ProjectList>
            {projectRows.map((name, i) => (
              <ProjectRow key={name} $on={i === 4}>
                <RowName>{name}</RowName>
                <Cell>{i === 0 && <Goggles />}</Cell>
                <Cell>{i === 0 && <Dither />}</Cell>
              </ProjectRow>
            ))}
          </ProjectList>
          <Scroll />
        </Split>

        <Header>properties</Header>
        <Split $h={591} $mt={1}>
          <Column>
            <GroupBar sign="-" title="interpositions" />
            <ListLine $h={95} $mt={0}>
              <ListBox>
                {interpositions.map(n => (
                  <ListItem key={n} $on={n === 9}>interposition {n}</ListItem>
                ))}
              </ListBox>
              <ListScroll $tint="#5a5a5a">
                <Thumb $top={38} $h={46} />
              </ListScroll>
            </ListLine>
            <PlainButton $mt={4}>add interposition</PlainButton>
            <PlainButton $mt={5}>remove interposition</PlainButton>
            <ValueStack $mt={2}>
              <Value label="distance" value="24.110 ft" />
              <Value label="roll" value="3.738 °" />
              <Value label="pitch" value="0.960 °" />
              <Value label="yaw" value="-0.554 °" />
            </ValueStack>
            <FlagRow $h={25}>
              <CheckBox on />
              <FlagLabel>follow path</FlagLabel>
            </FlagRow>
            <GroupBar sign="+" title="limits" />
            <GroupBar sign="+" title="line" />
            <GroupBar sign="+" title="misc" />
            <GroupBar sign="+" title="report" />
            <GroupBar sign="-" title="sequences" />
            <PlainButton $mt={2} $indent={20}>evaluate: backward</PlainButton>
            <ValueStack $mt={2}>
              <Value label="distance offset" value="0.000 ft" />
              <Value label="time offset" value="0.000 s" />
              <Value label="spring effect" value="0.000 %" />
            </ValueStack>
            <ListLine $h={94} $mt={2}>
              <ListBox>
                <ListItem $on>deceleration</ListItem>
              </ListBox>
              <ListScroll $tint="#3c3c3c" />
            </ListLine>
            <PlainButton $mt={4}>add sequence</PlainButton>
            <PlainButton $mt={5}>remove sequence</PlainButton>
          </Column>
          <Scroll $tint="#5a5a5a">
            <Thumb $top={0} $h={498} />
          </Scroll>
        </Split>

        <Header>tools</Header>
        <Split $h={126} $mt={1}>
          <Column>
            <GroupBar sign="+" title="animation" />
            <GroupBar sign="+" title="convert" />
            <GroupBar sign="+" title="joints" />
            <GroupBar sign="+" title="report dynamics" />
          </Column>
          <Scroll />
        </Split>
        <HelpButton>help</HelpButton>

        <AnnotRect $x={-4} $y={165} $w={191} $h={27} />
        <AnnotRect $x={16} $y={337} $w={137} $h={29} />
      </Sidebar>

      <Main>
        <MenuBar>
          {['Project', 'Edit', 'Group', 'Layer', 'Create', 'Window', 'Help'].map(m => (
            <span key={m}>{m}</span>
          ))}
        </MenuBar>
        <Toolbar $pl={2} $h={38}>
          <Tool $w={36}><Undo /></Tool>
          <Tool $w={36}><Redo /></Tool>
          <Sep $l={1} $r={4} />
          <Tool $w={41} $gap={2} $active><Pick curve /><Drop /></Tool>
          <Tool $w={43}><DotRect /><Drop /></Tool>
          <Tool $w={46}><Fork /><Drop /></Tool>
          <Tool $w={37}><RedCross /></Tool>
          <Sep $l={0} $r={3} />
          <Tool $w={43}><Lens /><Drop /></Tool>
          <Tool $w={46}><RedTarget /><Drop /></Tool>
          <Tool $w={46}><Move /><Drop /></Tool>
          <Sep $l={0} $r={3} />
          <Tool $w={43}><Sphere /><Drop /></Tool>
          <Tool $w={43}><Surface /><Drop /></Tool>
          <Tool $w={46}><Disc /><Drop /></Tool>
          <Tool $w={45}><ArcTool /><Drop /></Tool>
          <Tool $w={41}><Dimension /><Drop /></Tool>
          <Tool $w={45}><Chisel /><Drop /></Tool>
          <Sep $l={5} $r={3} />
          <Tool $w={43}><FramedDisc /><Drop /></Tool>
          <Tool $w={44}><Rings /><Drop /></Tool>
          <Tool $w={44.5}><Axes /><Drop /></Tool>
          <Tool $w={43.5}><Mirror /><Drop /></Tool>
          <Tool $w={44}><Magnet /><Drop /></Tool>
          <Tool $w={36}><Gear /></Tool>
          <Tool $w={32} $active $center><GridIcon /></Tool>
          <Sep $l={5} $r={3} />
          <Tool $w={40}><HelpIcon /><Drop /></Tool>
        </Toolbar>

        <Canvas>
          <Scene />
        </Canvas>

        <Toolbar $pl={2} $h={38}>
          <Tool $w={43}><Ball /><Drop /></Tool>
          <Tool $w={45}><Blob /><Drop /></Tool>
          <Tool $w={44}><Swatch /><Drop /></Tool>
          <Sep $l={3} $r={3} />
          <Tool $w={37}><GraphIcon /></Tool>
          <Tool $w={42}><Teapot /><Drop /></Tool>
          <Tool $w={37}><Play /></Tool>
          <Tool $w={41}><PlayList /><Drop /></Tool>
          <Sep $l={4} $r={4} />
          <Tool $w={33}><Note /></Tool>
          <Tool $w={40}><Printer /><Drop /></Tool>
          <TimePanel>
            <TimeLabel>time</TimeLabel>
            <svg width="124" height="16" viewBox="0 0 124 16">
              <path d="M1 8H123" stroke="#777" strokeWidth="1.5" />
              <path d="M1 4v8M123 4v8" stroke="#777" />
              <circle cx="12" cy="8" r="4.5" fill="#555" stroke="#222" />
            </svg>
            <TimeValue>0.454 s</TimeValue>
          </TimePanel>
        </Toolbar>
        <SashRow />
        <Status>position - x: -1.289 ft, y: 50.541 ft, z: 0.000 ft</Status>

        <TargetRing />
        <Logo width="99" height="50" viewBox="0 0 99 50">
          <path d="M6 36L15 10c2-4 5-4 6 0l2 10 8 6-7 9-9 7z" fill="url(#hatch)" stroke="#777" />
          <path d="M26 30L38 14 62 4l24 3 10 10-6 13-22 8-14 8-14-4-10-6z" fill="url(#hatch)" stroke="#666" />
          <path d="M44 16l18-8 12 2-8 14-14 4z" fill="#8e8e8e" stroke="#555" />
          <path d="M36 26l14 8M58 34l26-10M68 8l20 14M30 32l22 10" stroke="#8a8a8a" fill="none" />
          <circle cx="46" cy="40" r="6" fill="#cfcfcf" stroke="#555" />
          <circle cx="84" cy="26" r="5" fill="#cfcfcf" stroke="#555" />
        </Logo>
      </Main>

      <DiagramWindow>
        <TitleBar>
          <svg width="12" height="14" viewBox="0 0 12 14">
            <rect x=".5" y=".5" width="11" height="13" fill="#fff" stroke="#567" />
            <path d="M3 2v9h7" fill="none" stroke="#0000cc" />
            <path d="M3 10l3-5 4 2" fill="none" stroke="#d01010" />
          </svg>
          <TitleText>Diagram [Animated]-[distance-yaw]</TitleText>
          <WinButton>
            <svg width="11" height="11"><path d="M0 5.5H11" stroke="#111" /></svg>
          </WinButton>
          <WinButton>
            <svg width="11" height="11"><rect x=".5" y=".5" width="9.5" height="9.5" fill="none" stroke="#111" /></svg>
          </WinButton>
          <WinButton>
            <svg width="11" height="11"><path d="M.5 .5l10 10M10.5 .5l-10 10" stroke="#111" /></svg>
          </WinButton>
        </TitleBar>
        <WindowBody>
          <DiagramSide>
            <Tabs $width={194}>
              <Tab $width={96}>controllers</Tab>
              <Tab $on $width={98}>diagrams</Tab>
            </Tabs>
            <Split $h={606}>
              <DiagramList>
                <DiagramRows>
                  {upperSet.map(n => <DiagramEntry key={n} name={n} />)}
                  <GroupRow>
                    <GroupSign>-</GroupSign>
                    Animated
                  </GroupRow>
                  {timeSet.map(n => <DiagramEntry key={n} name={n} />)}
                  {distanceSet.map(n => <DiagramEntry key={`b${n}`} name={n} />)}
                </DiagramRows>
              </DiagramList>
              <Scroll $tint="#5a5a5a" $mt={0}>
                <Thumb $top={178} $h={385} />
              </Scroll>
            </Split>
            <Header $width={194}>properties</Header>
            <OutputFrame>
              <OutputGroup>
                <OutputBar>
                  <BarSign>-</BarSign>
                  <BarTitle>output</BarTitle>
                </OutputBar>
                <FlagRow $h={22}>
                  <CheckBox on />
                  <FlagLabel>use parent color</FlagLabel>
                </FlagRow>
                <FlagRow $h={22}>
                  <CheckBox />
                  <FlagLabel>flip horizontal</FlagLabel>
                </FlagRow>
                <FlagRow $h={22}>
                  <CheckBox />
                  <FlagLabel>flip vertical</FlagLabel>
                </FlagRow>
              </OutputGroup>
              <Scroll />
            </OutputFrame>
            <SashLeft $x={204} $y={398} />
          </DiagramSide>
          <ChartColumn>
            <Toolbar $pl={1.5} $h={37}>
              <Tool $w={36.5}><Undo /></Tool>
              <Tool $w={37}><Redo /></Tool>
              <Sep $l={0} $r={4} />
              <Tool $w={41} $gap={3} $active><Pick /><Drop /></Tool>
              <Tool $w={35}><DotRect /></Tool>
              <Tool $w={37}><RedCross /></Tool>
              <Sep $l={0} $r={3} />
              <Tool $w={48}><Lens /><Drop /></Tool>
              <Sep $l={0} $r={1} />
              <Tool $w={40}><Printer /><Drop /></Tool>
            </Toolbar>
            <Chart />
          </ChartColumn>
        </WindowBody>
      </DiagramWindow>
      <SashLeft $x={205} $y={502} />
    </App_>
  )
}
